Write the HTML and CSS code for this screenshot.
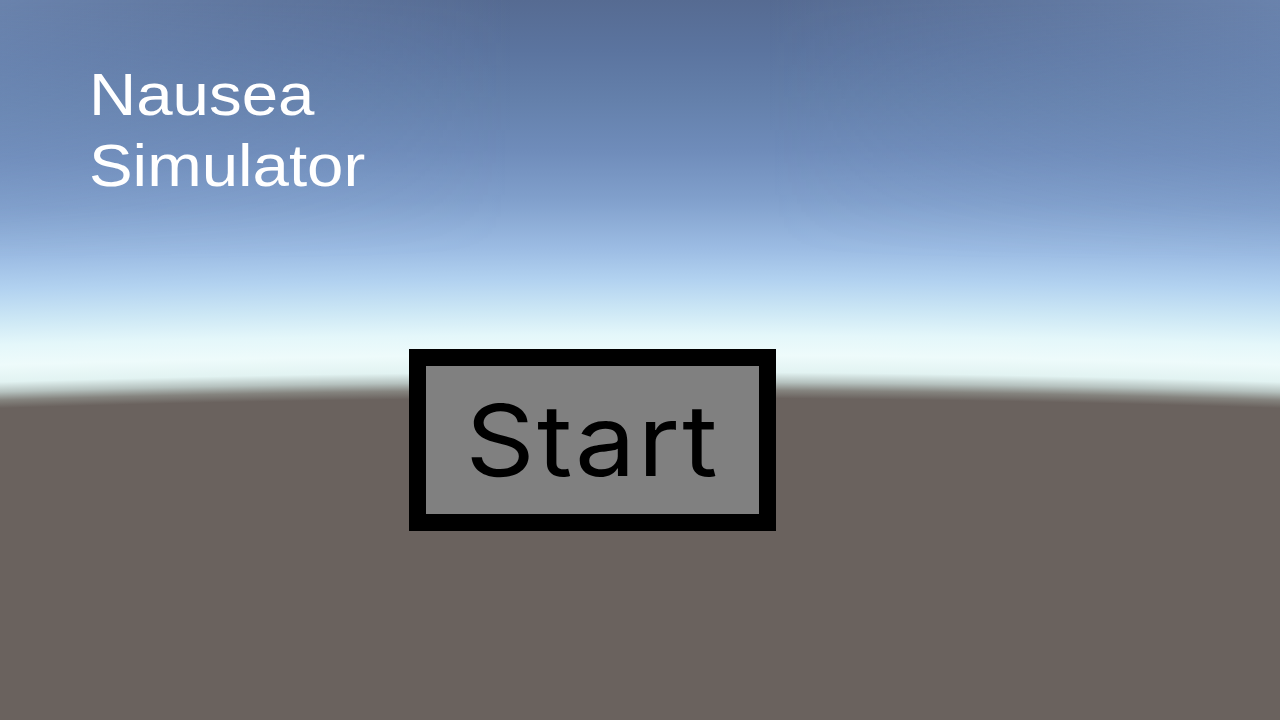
FILE: index.html
```html
<!DOCTYPE html>
<html lang="en">
<head>
  <meta charset="UTF-8" />
  <meta name="viewport" content="width=device-width, initial-scale=1.0"/>
  <title>Nausea Simulator</title>
  <link rel="stylesheet" href="styles.css">
</head>
<body>
  <div class="screen">
    <h1 class="title">Nausea<br>Simulator</h1>

    <div class="menu">
      <button class="start-btn" id="btn-start"><span>Start</span></button>
    </div>
  </div>
</body>
</html>
```

FILE: styles.css
```css
* {
  margin: 0;
  padding: 0;
  box-sizing: border-box;
}

html, body {
  width: 100%;
  height: 100%;
  overflow: hidden;
}

/* default skybox: curved horizon, sky bands above, ground below */
body {
  position: relative;
  background:
    radial-gradient(ellipse 4500px 1000px at 50% 1390px,
      #6a625e 0%,
      #6a625e 99.2%,
      #85847f 100%,
      #b5c1be 100.8%,
      #e2f3f2 101.8%,
      #eefbfb 103.5%,
      #e4f7fa 105.5%,
      #cce7f5 108%,
      #b2d2f0 111%,
      #9dbde4 114%,
      #81a0cc 119%,
      #6f8cba 124%,
      #6480ab 129%,
      #5b749f 134%,
      #566b92 139%);
}

/* lighter sky towards the sides */
body::before {
  content: "";
  position: absolute;
  inset: 0;
  background: linear-gradient(to right,
    rgba(130, 160, 205, 0.45) 0%,
    rgba(130, 160, 205, 0) 40%,
    rgba(130, 160, 205, 0) 60%,
    rgba(130, 160, 205, 0.45) 100%);
  -webkit-mask-image: linear-gradient(to bottom, #000 0, rgba(0, 0, 0, 0) 260px);
  mask-image: linear-gradient(to bottom, #000 0, rgba(0, 0, 0, 0) 260px);
  pointer-events: none;
}

.screen {
  position: relative;
  display: flex;
  flex-direction: column;
  align-items: flex-start;
  height: 100%;
  padding: 59px 0 0 89px;
}

.title {
  font-family: "Liberation Sans", Arial, sans-serif;
  font-weight: 400;
  font-size: 60px;
  line-height: 71px;
  color: #ffffff;
  transform: scaleX(1.09);
  transform-origin: left center;
}

.menu {
  display: flex;
  margin-top: 148px;
  padding-left: 320px;
}

.start-btn {
  display: flex;
  align-items: center;
  justify-content: center;
  width: 367px;
  height: 182px;
  border: 17px solid #000000;
  background: #808080;
  color: #000000;
  font-family: Inter, "Noto Sans", sans-serif;
  font-weight: 400;
  font-size: 99px;
  line-height: 1;
  letter-spacing: 2px;
  cursor: pointer;
}

.start-btn span {
  display: block;
  transform: scaleX(1.09);
}
```
